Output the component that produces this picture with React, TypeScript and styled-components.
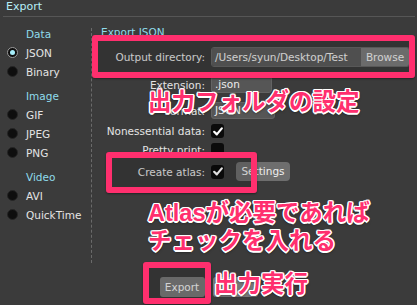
import React from "react";
import styled, { createGlobalStyle } from "styled-components";

const GlobalStyle = createGlobalStyle`
  html, body {
    margin: 0;
    padding: 0;
    background: #3b3b3b;
  }
  body {
    font-family: "DejaVu Sans", "Noto Sans CJK JP", sans-serif;
    font-size: 10.5px;
    color: #e4e4e4;
  }
`;

const SWindow = styled.div`
  position: relative;
  width: 417px;
  height: 305px;
  overflow: hidden;
  background: #3b3b3b;
`;

const STitleBar = styled.div`
  height: 16px;
  line-height: 14px;
  margin: 0 2px 0 3px;
  padding-left: 3px;
  border-bottom: 1px solid #565656;
  color: #b6eef7;
  font-size: 11px;
`;

const SBody = styled.div`
  display: flex;
`;

const SSidebar = styled.div`
  width: 84px;
  height: 235px;
  margin-top: 11px;
  padding-left: 7px;
  border-right: 1px dashed #6a6a6a;
  box-sizing: content-box;
`;

const SHeading = styled.div<{ $first?: boolean }>`
  height: 12px;
  line-height: 12px;
  margin: ${(p) => (p.$first ? "0" : "9px")} 0 3px 19px;
  color: #8fdcec;
`;

const SRadioRow = styled.div`
  display: flex;
  align-items: center;
  height: 19px;
  gap: 8px;
`;

const SRadio = styled.span<{ $on?: boolean }>`
  width: 11px;
  height: 11px;
  border-radius: 50%;
  background: #0e0e0e;
  box-sizing: border-box;
  border: 1px solid ${(p) => (p.$on ? "#9a9a9a" : "#262626")};
  display: flex;
  align-items: center;
  justify-content: center;
  &::after {
    content: "";
    width: 5px;
    height: 5px;
    border-radius: 50%;
    background: ${(p) => (p.$on ? "#a6eefa" : "transparent")};
  }
`;

const SMain = styled.div`
  flex: 1;
  padding-left: 9px;
  margin-top: 9px;
`;

const SPanelTitle = styled.div`
  height: 12px;
  line-height: 12px;
  color: #8fdcec;
`;

const SRow = styled.div<{ $top: number; $h: number }>`
  display: grid;
  grid-template-columns: 104px auto;
  column-gap: 6px;
  align-items: center;
  height: ${(p) => p.$h}px;
  margin-top: ${(p) => p.$top}px;
`;

const SLabel = styled.div`
  text-align: right;
  white-space: nowrap;
`;

const SControls = styled.div`
  display: flex;
  align-items: center;
`;

const SPathGroup = styled.div`
  display: flex;
  width: 199px;
  height: 20px;
  border-radius: 3px;
  overflow: hidden;
  border: 1px solid #656565;
  box-sizing: border-box;
`;

const SPathText = styled.div`
  flex: 1;
  background: #5b5b5b;
  padding-left: 3px;
  line-height: 18px;
  color: #ececec;
  white-space: nowrap;
  overflow: hidden;
`;

const SBrowse = styled.div`
  width: 48px;
  background: #7a7a7a;
  text-align: center;
  line-height: 18px;
  color: #eeeeee;
`;

const SField = styled.div<{ $w: number }>`
  width: ${(p) => p.$w}px;
  height: 17px;
  line-height: 15px;
  padding-left: 3px;
  box-sizing: border-box;
  border: 1px solid #636363;
  border-radius: 3px;
  background: #565656;
  color: #ececec;
`;

const SCheck = styled.span`
  width: 13px;
  height: 14px;
  border-radius: 3px;
  background: #0b0b0b;
  display: flex;
  align-items: center;
  justify-content: center;
`;

const SSmallButton = styled.div<{ $w: number; $ml?: number }>`
  width: ${(p) => p.$w}px;
  height: 19px;
  margin-left: ${(p) => p.$ml ?? 0}px;
  line-height: 19px;
  border-radius: 4px;
  background: #6e6e6e;
  text-align: center;
  color: #eeeeee;
`;

const SFooter = styled.div`
  display: flex;
  justify-content: center;
  gap: 8px;
  margin-top: 14px;
`;

const SButton = styled.div`
  width: 45px;
  height: 20px;
  line-height: 20px;
  border-radius: 3px;
  background: #787878;
  text-align: center;
  color: #f0f0f0;
`;

const SMarkBox = styled.div<{ $x: number; $y: number; $w: number; $h: number }>`
  position: absolute;
  left: ${(p) => p.$x}px;
  top: ${(p) => p.$y}px;
  width: ${(p) => p.$w}px;
  height: ${(p) => p.$h}px;
  box-sizing: border-box;
  border: 6px solid #ff2f6e;
  border-radius: 3px;
  background: rgba(0, 0, 0, 0.12);
  box-shadow: 0 1px 2px rgba(0, 0, 0, 0.4);
`;

const SNote = styled.div<{ $x: number; $y: number }>`
  position: absolute;
  left: ${(p) => p.$x}px;
  top: ${(p) => p.$y}px;
  font-family: "Liberation Sans", "Noto Sans CJK JP", sans-serif;
  font-weight: 700;
  font-size: 23.5px;
  line-height: 28px;
  color: #ff2f6e;
  white-space: nowrap;
  text-shadow: 1.5px 0 0 #fff, -1.5px 0 0 #fff, 0 1.5px 0 #fff, 0 -1.5px 0 #fff,
    1px 1px 0 #fff, -1px -1px 0 #fff, 1px -1px 0 #fff, -1px 1px 0 #fff,
    0 2px 3px rgba(0, 0, 0, 0.6);
`;

const CheckMark = () => (
  <svg width="10" height="9" viewBox="0 0 10 9">
    <path d="M1.2 4.8 L3.8 7.4 L8.8 1.4" fill="none" stroke="#fff" strokeWidth="2.2" strokeLinecap="round" strokeLinejoin="round" />
  </svg>
);

const sections: { title: string; items: string[] }[] = [
  { title: "Data", items: ["JSON", "Binary"] },
  { title: "Image", items: ["GIF", "JPEG", "PNG"] },
  { title: "Video", items: ["AVI", "QuickTime"] },
];

export default function App() {
  return (
    <>
      <GlobalStyle />
      <SWindow>
        <STitleBar>Export</STitleBar>
        <SBody>
          <SSidebar>
            {sections.map((s, i) => (
              <div key={s.title}>
                <SHeading $first={i === 0}>{s.title}</SHeading>
                {s.items.map((it) => (
                  <SRadioRow key={it}>
                    <SRadio $on={it === "JSON"} />
                    {it}
                  </SRadioRow>
                ))}
              </div>
            ))}
          </SSidebar>
          <SMain>
            <SPanelTitle>Export JSON</SPanelTitle>
            <SRow $top={9} $h={20}>
              <SLabel>Output directory:</SLabel>
              <SPathGroup>
                <SPathText>/Users/syun/Desktop/Test</SPathText>
                <SBrowse>Browse</SBrowse>
              </SPathGroup>
            </SRow>
            <SRow $top={9} $h={17}>
              <SLabel>Extension:</SLabel>
              <SField $w={61}>.json</SField>
            </SRow>
            <SRow $top={9} $h={17}>
              <SLabel>Format:</SLabel>
              <SField $w={64}>JSON</SField>
            </SRow>
            <SRow $top={5} $h={14}>
              <SLabel>Nonessential data:</SLabel>
              <SControls>
                <SCheck>
                  <CheckMark />
                </SCheck>
              </SControls>
            </SRow>
            <SRow $top={5} $h={14}>
              <SLabel>Pretty print:</SLabel>
              <SControls>
                <SCheck />
              </SControls>
            </SRow>
            <SRow $top={5} $h={19}>
              <SLabel>Create atlas:</SLabel>
              <SControls>
                <SCheck>
                  <CheckMark />
                </SCheck>
                <SSmallButton $w={54} $ml={12}>
                  Settings
                </SSmallButton>
              </SControls>
            </SRow>
          </SMain>
        </SBody>
        <SFooter>
          <SButton>Export</SButton>
          <SButton aria-label="Cancel" />
        </SFooter>

        <SMarkBox $x={92} $y={35} $w={323} $h={43} />
        <SMarkBox $x={106} $y={152} $w={151} $h={41} />
        <SMarkBox $x={143} $y={262} $w={68} $h={42} />
        <SNote $x={148} $y={88}>出力フォルダの設定</SNote>
        <SNote $x={148} $y={199}>
          Atlasが必要であれば
          <br />
          チェックを入れる
        </SNote>
        <SNote $x={214} $y={270}>出力実行</SNote>
      </SWindow>
    </>
  );
}
